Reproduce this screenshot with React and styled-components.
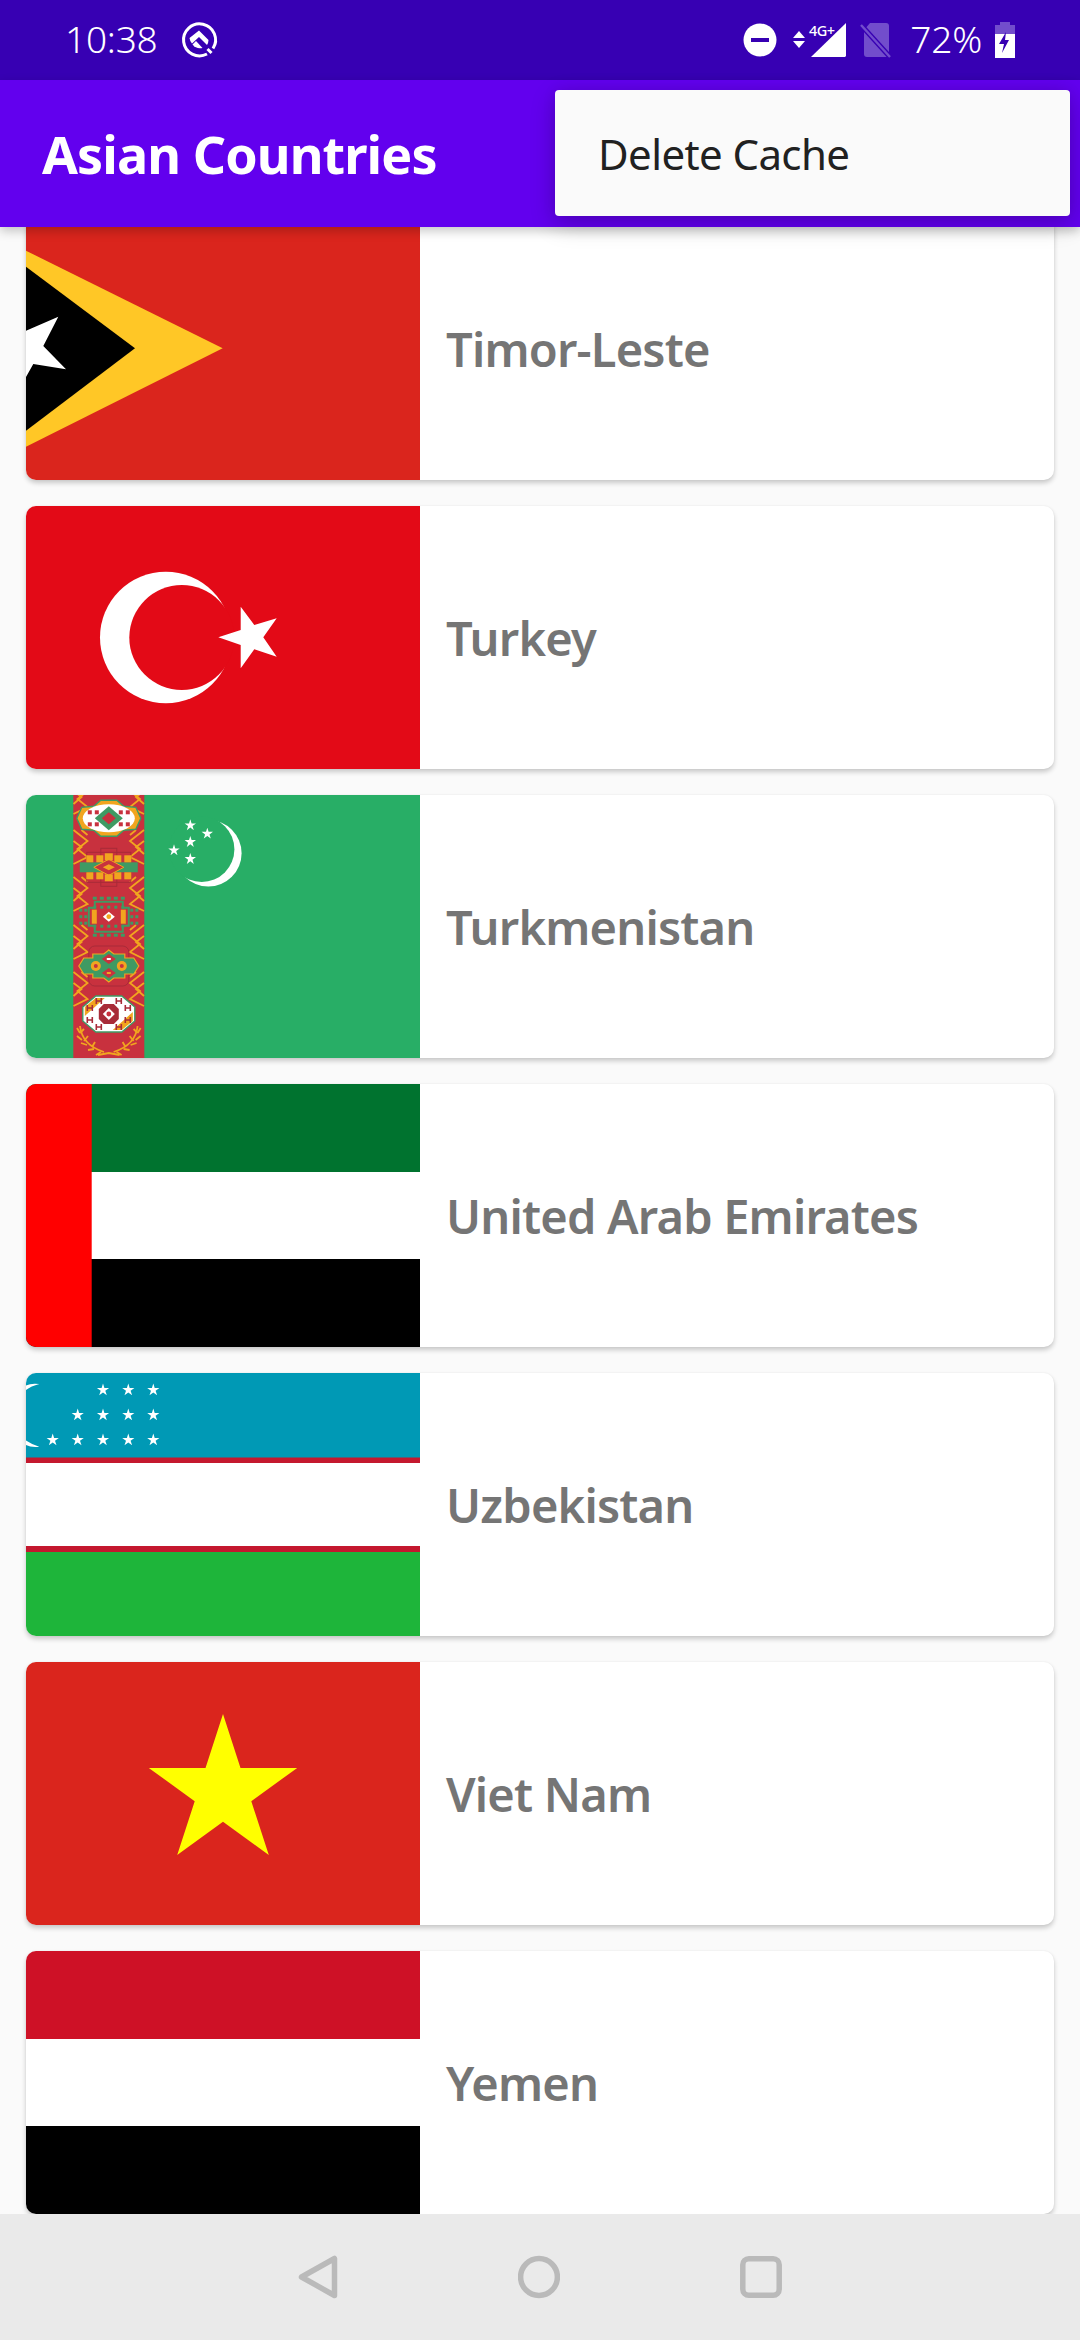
import styled, { createGlobalStyle } from 'styled-components';

const GlobalStyle = createGlobalStyle`
  html, body {
    margin: 0;
    padding: 0;
    background: #fafafa;
  }
  * {
    box-sizing: border-box;
  }
`;

const uiFont = `'Noto Sans', 'Open Sans', sans-serif`;

/* --------------------
Layout
-------------------- */
const Screen = styled.div`
  position: relative;
  width: 1080px;
  height: 2340px;
  display: flex;
  flex-direction: column;
  overflow: hidden;
  background: #fafafa;
  font-family: ${uiFont};
`;

const StatusBar = styled.div`
  flex: none;
  height: 80px;
  display: flex;
  align-items: center;
  padding: 0 65px;
  background: #3700b3;
  color: #fff;
  font-weight: 300;
  font-size: 37px;
`;

const StatusText = styled.span`
  line-height: 1;
  letter-spacing: -0.2px;
  padding-bottom: 3px;
  margin: ${(p) => p.$margin || '0'};
`;

const StatusIcon = styled.svg`
  flex: none;
  display: block;
  overflow: visible;
  margin-left: ${(p) => p.$left || 0}px;
`;

const SignalLabel = styled.text`
  fill: #fff;
  font-size: 14.5px;
  font-weight: 500;
  letter-spacing: -0.6px;
`;

const StatusSpacer = styled.div`
  flex: 1;
`;

const AppBar = styled.header`
  position: relative;
  z-index: 2;
  flex: none;
  height: 147px;
  display: flex;
  align-items: center;
  padding: 0 42px;
  background: #6200ee;
  box-shadow: 0 4px 10px rgba(0, 0, 0, 0.22);
`;

const Title = styled.h1`
  margin: 0;
  color: #fff;
  font-size: 52px;
  font-weight: 700;
  letter-spacing: -0.9px;
  line-height: 1;
`;

const Menu = styled.div`
  position: absolute;
  z-index: 3;
  top: 90px;
  left: 555px;
  width: 515px;
  height: 126px;
  display: flex;
  align-items: center;
  padding-left: 43px;
  background: #fafafa;
  border-radius: 4px;
  color: #212121;
  font-size: 42px;
  letter-spacing: -0.6px;
  box-shadow: 0 8px 26px rgba(0, 0, 0, 0.2), 0 0 14px rgba(0, 0, 0, 0.08);
`;

const List = styled.main`
  flex: 1;
  min-height: 0;
  overflow: hidden;
  display: flex;
  flex-direction: column;
  gap: 26px;
  padding: 0 26px;
  margin-top: -10px;
`;

const Card = styled.article`
  flex: none;
  height: 263px;
  display: flex;
  align-items: center;
  overflow: hidden;
  background: #fff;
  border-radius: 10px;
  box-shadow: 0 3px 5px rgba(0, 0, 0, 0.2), 0 0 2px rgba(0, 0, 0, 0.06);
`;

const Flag = styled.svg`
  flex: none;
  display: block;
  width: 394px;
  height: 263px;
`;

const Name = styled.span`
  margin-left: 26px;
  color: #757575;
  font-size: 47px;
  font-weight: 600;
  letter-spacing: -0.8px;
`;

const NavBar = styled.nav`
  position: relative;
  z-index: 2;
  flex: none;
  height: 126px;
  display: flex;
  justify-content: center;
  align-items: center;
  gap: 180px;
  background: #eaeaea;
`;

const NavIcon = styled.svg`
  display: block;
  fill: none;
  stroke: #bababa;
  stroke-width: 5.5;
  stroke-linejoin: round;
`;

/* --------------------
Flag helpers
-------------------- */
const starPoints = (cx, cy, r, inner = 0.382) => {
  const pts = [];
  for (let i = 0; i < 10; i++) {
    const rad = i % 2 === 0 ? r : r * inner;
    const a = -Math.PI / 2 + (i * Math.PI) / 5;
    pts.push(`${(cx + rad * Math.cos(a)).toFixed(1)},${(cy + rad * Math.sin(a)).toFixed(1)}`);
  }
  return pts.join(' ');
};

const CARPET_RED = '#c8313e';
const CARPET_GOLD = '#f1a51f';
const CARPET_GREEN = '#3f9a63';
const CARPET_LINE = '#a82b38';

function FlagTimor() {
  return (
    <Flag viewBox="0 0 394 263">
      <rect width="394" height="263" fill="#da251d" />
      <polygon points="0,33.7 196.7,131.3 0,229.7" fill="#ffc726" />
      <polygon points="0,49.7 109,131.3 0,213.7" fill="#000" />
      <polygon points="0,113.7 32.3,99.7 17.3,129 40,152.3 7.3,147 0,160" fill="#fff" />
    </Flag>
  );
}

function FlagTurkey() {
  return (
    <Flag viewBox="0 0 394 263">
      <rect width="394" height="263" fill="#e30a17" />
      <circle cx="139.8" cy="131.5" r="65.8" fill="#fff" />
      <circle cx="155.8" cy="131.5" r="52.5" fill="#e30a17" />
      <polygon
        points="214.7,100.7 228.3,119 250.7,112.3 237.3,131.3 250.7,150.7 228.3,143.3 214.7,162.3 214.7,139 192.3,131.3 214.7,124"
        fill="#fff"
      />
    </Flag>
  );
}

// gold braid on one edge of the carpet band
function Braid({ y, side }) {
  const edge = side === 'left' ? 47.5 : 118;
  const dir = side === 'left' ? 1 : -1;
  const x = (d) => edge + dir * d;
  return (
    <path
      d={`M${x(0)} ${y - 15} L${x(14)} ${y - 4} L${x(4)} ${y + 4} L${x(14)} ${y + 12} L${x(0)} ${y + 19} M${x(0)} ${y - 4} L${x(8)} ${y + 2} L${x(0)} ${y + 9} M${x(8)} ${y - 15} L${x(14)} ${y - 10}`}
      fill="none"
      stroke={CARPET_GOLD}
      strokeWidth="1.8"
    />
  );
}

function GulOne() {
  return (
    <g transform="translate(82.8 23.3)">
      <polygon
        points="-32,0 -27,-11 -15,-12 -8,-18 8,-18 15,-12 27,-11 32,0 27,11 15,12 8,18 -8,18 -15,12 -27,11"
        fill={CARPET_GOLD}
        stroke={CARPET_GREEN}
        strokeWidth="1.4"
      />
      <ellipse rx="26" ry="14" fill="#fff" />
      {[-19, -12, 12, 19].map((x) => (
        <rect key={x} x={x - 2} y="-8" width="4" height="4" fill={CARPET_RED} />
      ))}
      {[-19, -12, 12, 19].map((x) => (
        <rect key={x} x={x - 2} y="4" width="4" height="4" fill={CARPET_RED} />
      ))}
      <polygon points="-14,0 0,-12 14,0 0,12" fill={CARPET_GREEN} />
      <polygon points="-7,0 0,-6 7,0 0,6" fill={CARPET_RED} />
    </g>
  );
}

function GulTwo() {
  return (
    <g transform="translate(82.8 72.3)">
      <rect x="-22" y="-15" width="44" height="30" fill="none" stroke={CARPET_LINE} strokeWidth="1" />
      <rect x="-8" y="-19" width="16" height="38" fill="none" stroke={CARPET_LINE} strokeWidth="1" />
      <rect x="-29" y="-5" width="58" height="10" fill={CARPET_GREEN} />
      {[-19, -9, 9, 19].map((x) => (
        <g key={x}>
          <rect x={x - 3.5} y="-12" width="7" height="7" fill={CARPET_GOLD} />
          <rect x={x - 3.5} y="5" width="7" height="7" fill={CARPET_GOLD} />
        </g>
      ))}
      <polygon points="-15,0 0,-8 15,0 0,8" fill={CARPET_RED} stroke={CARPET_GOLD} strokeWidth="1" />
      <rect x="-4" y="-14" width="8" height="7" fill={CARPET_GOLD} />
      <rect x="-4" y="7" width="8" height="7" fill={CARPET_GOLD} />
      <polygon points="-6,0 0,-3 6,0 0,3" fill={CARPET_GOLD} />
    </g>
  );
}

function GulThree() {
  return (
    <g transform="translate(82.8 121.7)">
      <polygon
        points="-20,-9 -14,-9 -14,-15 14,-15 14,-9 20,-9 20,9 14,9 14,15 -14,15 -14,9 -20,9"
        fill="none"
        stroke={CARPET_GREEN}
        strokeWidth="2"
      />
      {[-28, -23, 23, 28].map((x) => (
        <g key={x} fill={CARPET_GREEN}>
          <rect x={x - 1.5} y="-8" width="3" height="3" />
          <rect x={x - 1.5} y="-1.5" width="3" height="3" />
          <rect x={x - 1.5} y="5" width="3" height="3" />
        </g>
      ))}
      {[-14, -7, 0, 7, 14].map((x) => (
        <g key={x} fill={CARPET_GREEN}>
          <rect x={x - 2} y="-20" width="4" height="3" />
          <rect x={x - 2} y="17" width="4" height="3" />
          <rect x={x - 1.5} y="-11" width="3" height="3" />
          <rect x={x - 1.5} y="8" width="3" height="3" />
        </g>
      ))}
      <rect x="-17" y="-7" width="5" height="14" fill={CARPET_GOLD} />
      <rect x="12" y="-7" width="5" height="14" fill={CARPET_GOLD} />
      <polygon points="-6,0 0,-5 6,0 0,5" fill="#fff" />
      <circle r="2.4" fill={CARPET_GOLD} />
    </g>
  );
}

function GulFour() {
  return (
    <g transform="translate(82.8 171)">
      <rect x="-20" y="-20" width="40" height="40" rx="6" fill="none" stroke={CARPET_LINE} strokeWidth="1" />
      <polygon
        points="-30,0 -25,-8 -16,-8 -16,-12 -5,-12 0,-16 5,-12 16,-12 16,-8 25,-8 30,0 25,8 16,8 16,12 5,12 0,16 -5,12 -16,12 -16,8 -25,8"
        fill={CARPET_GREEN}
        stroke={CARPET_GOLD}
        strokeWidth="1.2"
      />
      <circle cx="-13" r="5" fill={CARPET_GOLD} />
      <circle cx="13" r="5" fill={CARPET_GOLD} />
      <circle cx="-13" r="2" fill={CARPET_RED} />
      <circle cx="13" r="2" fill={CARPET_RED} />
      <polygon points="-7,-7 0,-12 7,-7 0,-2" fill={CARPET_RED} />
      <polygon points="-7,7 0,2 7,7 0,12" fill={CARPET_RED} />
      <rect x="-2" y="-8" width="4" height="2" fill="#fff" />
      <rect x="-2" y="6" width="4" height="2" fill={CARPET_GOLD} />
    </g>
  );
}

// white medallion with the little red H marks
function GulFive() {
  const marks = [
    [-19, -6], [-19, 6], [-10, -13], [-10, 13],
    [19, -6], [19, 6], [10, -13], [10, 13],
  ];
  return (
    <g transform="translate(82.8 219)">
      <polygon
        points="-26,-7 -13,-18 13,-18 26,-7 26,7 13,18 -13,18 -26,7"
        fill="#fff"
        stroke={CARPET_GREEN}
        strokeWidth="1.4"
      />
      <polygon points="-24,-7 -13,-16 -4,-16 -24,2" fill={CARPET_GOLD} />
      <polygon points="24,7 13,16 4,16 24,-2" fill={CARPET_GOLD} />
      {marks.map(([x, y]) => (
        <path
          key={`${x}-${y}`}
          d={`M${x - 2.5} ${y - 3}V${y + 3}M${x + 2.5} ${y - 3}V${y + 3}M${x - 2.5} ${y}H${x + 2.5}`}
          stroke={CARPET_LINE}
          strokeWidth="1.6"
          fill="none"
        />
      ))}
      <polygon points="-10,-5 -5,-10 5,-10 10,-5 10,5 5,10 -5,10 -10,5" fill={CARPET_LINE} />
      <polygon points="-6,0 0,-6 6,0 0,6" fill="#fff" />
      <circle r="2.4" fill={CARPET_RED} />
    </g>
  );
}

function Wreath() {
  return (
    <g fill="none" stroke={CARPET_GOLD} strokeWidth="1.8">
      <path d="M54 231 Q56 250 78 257" />
      <path d="M111.6 231 Q109.6 250 87.6 257" />
      <path d="M54 238 L51 233 M56 245 L51 241 M61 250 L55 248 M68 254 L62 255 M75 257 L70 260" />
      <path d="M111.6 238 L114.6 233 M109.6 245 L114.6 241 M104.6 250 L110.6 248 M97.6 254 L103.6 255 M90.6 257 L95.6 260" />
      <path d="M54 238 L58 234 M58 246 L62 241 M66 252 L69 247" />
      <path d="M111.6 238 L107.6 234 M107.6 246 L103.6 241 M99.6 252 L96.6 247" />
      <path d="M72 260 L82.8 258 L93.6 260" />
    </g>
  );
}

function FlagTurkmenistan() {
  const braidYs = [0, 50, 97, 145, 192];
  return (
    <Flag viewBox="0 0 394 263">
      <rect width="394" height="263" fill="#28ae66" />
      <rect x="47.3" width="71" height="263" fill={CARPET_RED} />
      {braidYs.map((y) => (
        <g key={y}>
          <Braid y={y} side="left" />
          <Braid y={y} side="right" />
        </g>
      ))}
      <GulOne />
      <GulTwo />
      <GulThree />
      <GulFour />
      <GulFive />
      <Wreath />
      <circle cx="182.3" cy="58.3" r="33.3" fill="#fff" />
      <circle cx="175.7" cy="54.3" r="32.7" fill="#28ae66" />
      <polygon points={starPoints(164.3, 30.3, 6)} fill="#fff" />
      <polygon points={starPoints(181.3, 38.7, 6)} fill="#fff" />
      <polygon points={starPoints(164.3, 47, 6)} fill="#fff" />
      <polygon points={starPoints(148, 55.3, 6)} fill="#fff" />
      <polygon points={starPoints(164.3, 64, 6)} fill="#fff" />
    </Flag>
  );
}

function FlagUae() {
  return (
    <Flag viewBox="0 0 394 263">
      <rect width="394" height="88" fill="#00732f" />
      <rect y="88" width="394" height="87" fill="#fff" />
      <rect y="175" width="394" height="88" fill="#000" />
      <rect width="65.7" height="263" fill="#f00" />
    </Flag>
  );
}

const uzbekStars = [
  [77, 17], [102.3, 17], [127.3, 17],
  [51.7, 42], [77, 42], [102.3, 42], [127.3, 42],
  [26.7, 67], [51.7, 67], [77, 67], [102.3, 67], [127.3, 67],
];

function FlagUzbekistan() {
  return (
    <Flag viewBox="0 0 394 263">
      <rect width="394" height="85" fill="#0099b5" />
      <rect y="84.5" width="394" height="5.5" fill="#c4182e" />
      <rect y="90" width="394" height="83" fill="#fff" />
      <rect y="173" width="394" height="6" fill="#c4182e" />
      <rect y="179" width="394" height="84" fill="#1eb53a" />
      <path d="M13.3 11 Q5 10 0 12.5 L0 17 Q5 13 13.3 11 Z" fill="#fff" />
      <path d="M13.3 73.7 Q5 74.5 0 72 L0 67.5 Q5 71 13.3 73.7 Z" fill="#fff" />
      {uzbekStars.map(([x, y]) => (
        <polygon key={`${x}-${y}`} points={starPoints(x, y, 6.4)} fill="#fff" />
      ))}
    </Flag>
  );
}

function FlagVietnam() {
  return (
    <Flag viewBox="0 0 394 263">
      <rect width="394" height="263" fill="#da251d" />
      <polygon points={starPoints(197, 130, 78)} fill="#ff0" />
    </Flag>
  );
}

function FlagYemen() {
  return (
    <Flag viewBox="0 0 394 263">
      <rect width="394" height="88" fill="#ce1126" />
      <rect y="88" width="394" height="87" fill="#fff" />
      <rect y="175" width="394" height="88" fill="#000" />
    </Flag>
  );
}

const countries = [
  { name: 'Timor-Leste', Art: FlagTimor },
  { name: 'Turkey', Art: FlagTurkey },
  { name: 'Turkmenistan', Art: FlagTurkmenistan },
  { name: 'United Arab Emirates', Art: FlagUae },
  { name: 'Uzbekistan', Art: FlagUzbekistan },
  { name: 'Viet Nam', Art: FlagVietnam },
  { name: 'Yemen', Art: FlagYemen },
];

/* --------------------
Status icons
-------------------- */
function RingLogo() {
  return (
    <StatusIcon width="36" height="36" viewBox="0 0 36 36">
      <path d="M26 32A16 16 0 1 1 32 26.5" fill="none" stroke="#fff" strokeWidth="3" />
      <path d="M18 8.5 L27.5 18 A9.8 9.8 0 0 1 26 23 L18 15 L11 21.5 A9.8 9.8 0 0 1 8.5 16 Z" fill="#fff" />
      <path d="M11.5 22.5 L15 19 L21.5 26 A9.8 9.8 0 0 1 11.5 22.5 Z" fill="#fff" />
      <path d="M26.5 27 L30.5 31" stroke="#fff" strokeWidth="3" />
    </StatusIcon>
  );
}

function DndIcon() {
  return (
    <StatusIcon width="34" height="34" viewBox="0 0 34 34">
      <circle cx="17" cy="17" r="16.5" fill="#fff" />
      <rect x="8" y="15" width="18" height="4" fill="#3700b3" />
    </StatusIcon>
  );
}

function SignalIcon() {
  return (
    <StatusIcon width="53" height="36" viewBox="0 0 53 36" $left={16}>
      <polygon points="6,9 12,16 0,16" fill="#fff" />
      <polygon points="6,26 12,19 0,19" fill="#fff" />
      <polygon points="53,1 53,34 52,35 18,35" fill="#fff" />
      <SignalLabel x="16" y="14">4G+</SignalLabel>
    </StatusIcon>
  );
}

function NoSimIcon() {
  return (
    <StatusIcon width="32" height="36" viewBox="0 0 32 36" $left={14}>
      <path d="M10 1H26A3 3 0 0 1 29 4V32A3 3 0 0 1 26 35H7A3 3 0 0 1 4 32V8Z" fill="#724dcc" />
      <path d="M1 3L30 35" stroke="#3700b3" strokeWidth="5" />
      <path d="M1 3L30 35" stroke="#724dcc" strokeWidth="2.4" />
    </StatusIcon>
  );
}

function BatteryIcon() {
  return (
    <StatusIcon width="20" height="36" viewBox="0 0 20 36" $left={13}>
      <path d="M5 0H15V3H20V12H0V3H5Z" fill="#724dcc" />
      <rect y="12" width="20" height="24" fill="#fff" />
      <polygon points="11,10 4,22 9,22 7,31 14,18 10,18" fill="#3700b3" />
    </StatusIcon>
  );
}

function App() {
  return (
    <Screen>
      <GlobalStyle />
      <StatusBar>
        <StatusText $margin="0 23px 0 0">10:38</StatusText>
        <RingLogo />
        <StatusSpacer />
        <DndIcon />
        <SignalIcon />
        <NoSimIcon />
        <StatusText $margin="0 0 0 18px">72%</StatusText>
        <BatteryIcon />
      </StatusBar>
      <AppBar>
        <Title>Asian Countries</Title>
      </AppBar>
      <Menu>Delete Cache</Menu>
      <List>
        {countries.map(({ name, Art }) => (
          <Card key={name}>
            <Art />
            <Name>{name}</Name>
          </Card>
        ))}
      </List>
      <NavBar>
        <NavIcon width="40" height="44" viewBox="0 0 40 44">
          <path d="M36.5 3.5V40.5L3.5 22Z" />
        </NavIcon>
        <NavIcon width="42" height="44" viewBox="0 0 42 44">
          <circle cx="21" cy="22" r="18.4" />
        </NavIcon>
        <NavIcon width="42" height="44" viewBox="0 0 42 44">
          <rect x="2.8" y="3.8" width="36.4" height="36.4" rx="6" />
        </NavIcon>
      </NavBar>
    </Screen>
  );
}

export default App;
